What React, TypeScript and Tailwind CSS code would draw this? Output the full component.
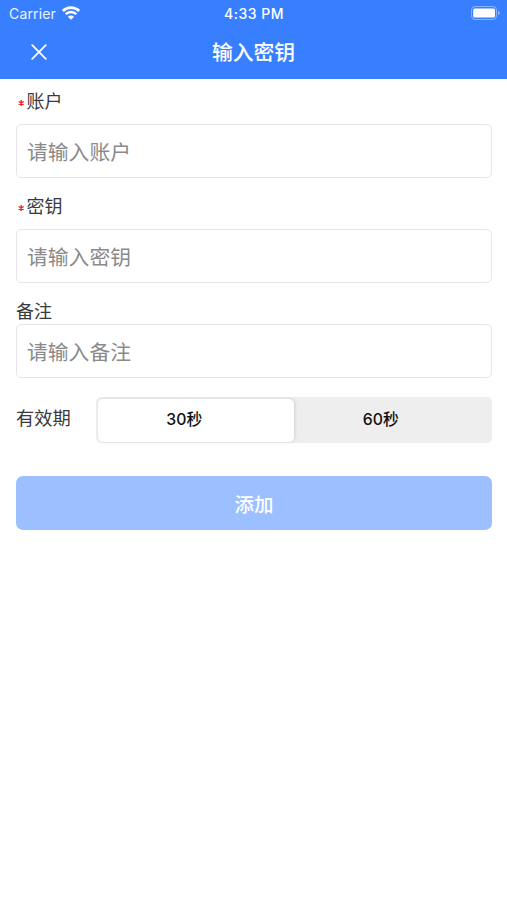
import { useState } from "react"

const periods = ["30秒", "60秒"]

function StatusBar() {
  return (
    <div className="grid grid-cols-3 items-center h-[27px] pl-[9px] pr-[6px] text-[14px] leading-none">
      <div className="flex items-center gap-[6px]">
        <span className="tracking-[0.15px] text-white/90">Carrier</span>
        <svg
          className="-mt-[1px]"
          width="18"
          height="14"
          viewBox="0 0 18 14"
          fill="none"
        >
          <path
            d="M0.8 4.9C5.4 0.5 12.6 0.5 17.2 4.9"
            stroke="white"
            strokeWidth="2.7"
          />
          <path
            d="M3.7 8.2C6.7 5.3 11.3 5.3 14.3 8.2"
            stroke="white"
            strokeWidth="2.5"
          />
          <path
            d="M5.9 10.7C7.6 9.1 10.4 9.1 12.1 10.7L9 13.8Z"
            fill="white"
          />
        </svg>
      </div>
      <span className="pt-[1px] pr-[2px] text-center text-[14px] font-medium tracking-[0.5px] whitespace-nowrap">
        4:33 PM
      </span>
      <svg
        className="justify-self-end -mt-[1px]"
        width="30"
        height="14"
        viewBox="0 0 30 14"
        fill="none"
      >
        <rect
          x="0.5"
          y="0.5"
          width="25"
          height="13"
          rx="3.5"
          stroke="white"
          strokeOpacity="0.4"
        />
        <rect x="2.2" y="2.4" width="21.8" height="9.2" rx="1.6" fill="white" />
        <path
          d="M27 4.8C29.3 5.4 29.3 8.6 27 9.2Z"
          fill="white"
          fillOpacity="0.45"
        />
      </svg>
    </div>
  )
}

type FieldProps = {
  label: string
  placeholder: string
  required?: boolean
  className: string
}

function Field({ label, placeholder, required, className }: FieldProps) {
  return (
    <label className={`flex flex-col ${className}`}>
      <span className="flex items-center h-[26px] pt-[2px] text-[18px] leading-[26px] text-[#3a3a3a]">
        {required && (
          <svg
            className="ml-[1px] mr-[1.5px] mt-[2px]"
            width="8"
            height="8"
            viewBox="0 0 8 8"
          >
            <path
              d="M4.2 1V7M1.6 2.5L6.8 5.5M6.8 2.5L1.6 5.5"
              stroke="#ff2020"
              strokeWidth="1.4"
            />
          </svg>
        )}
        {label}
      </span>
      <input
        className={`w-full h-[54px] rounded-[5px] border-[1.5px] border-[#e6e6e6] bg-white px-[10px] pt-[2px] text-[20.8px] text-[#333333] outline-none placeholder:text-[#8a8a8a] ${
          required ? "mt-[10px]" : ""
        }`}
        placeholder={placeholder}
      />
    </label>
  )
}

export default function App() {
  const [period, setPeriod] = useState(periods[0])

  return (
    <div className="min-h-screen bg-white font-[Inter,'Noto_Sans_CJK_SC',sans-serif]">
      <header className="h-[79px] bg-[#387fff] text-white">
        <StatusBar />
        <div className="grid grid-cols-[78px_1fr_78px] items-center h-[52px]">
          <button className="justify-self-center -mt-[2px]" aria-label="关闭">
            <svg width="16" height="16" viewBox="0 0 16 16" fill="none">
              <path
                d="M1.2 1.2L14.8 14.8M14.8 1.2L1.2 14.8"
                stroke="white"
                strokeWidth="1.7"
                strokeLinecap="round"
              />
            </svg>
          </button>
          <h1 className="text-center text-[20.8px] leading-[30px] font-medium">
            输入密钥
          </h1>
        </div>
      </header>

      <main className="px-[15px] pt-[9px] pl-[16px]">
        <Field label="账户" placeholder="请输入账户" required className="" />
        <Field
          label="密钥"
          placeholder="请输入密钥"
          required
          className="mt-[15px]"
        />
        <Field label="备注" placeholder="请输入备注" className="mt-[15px]" />

        <div className="flex items-center mt-[19px]">
          <span className="w-[80px] pb-[3px] text-[18.3px] text-[#3a3a3a]">
            有效期
          </span>
          <div className="flex flex-1 h-[46px] rounded-[5px] bg-[#eeeeee] p-[1.5px]">
            {periods.map((item) => (
              <button
                key={item}
                className={`flex-1 rounded-[5px] pr-[23px] text-[15.8px] font-medium text-[#111111] ${
                  item === period
                    ? "bg-white shadow-[1px_0_3px_rgba(0,0,0,0.12)]"
                    : ""
                }`}
                onClick={() => setPeriod(item)}
              >
                {item}
              </button>
            ))}
          </div>
        </div>

        <button className="w-full h-[54px] mt-[33px] pt-[5px] rounded-[7px] bg-[#9cbfff] text-[19.5px] font-medium text-white">
          添加
        </button>
      </main>
    </div>
  )
}
